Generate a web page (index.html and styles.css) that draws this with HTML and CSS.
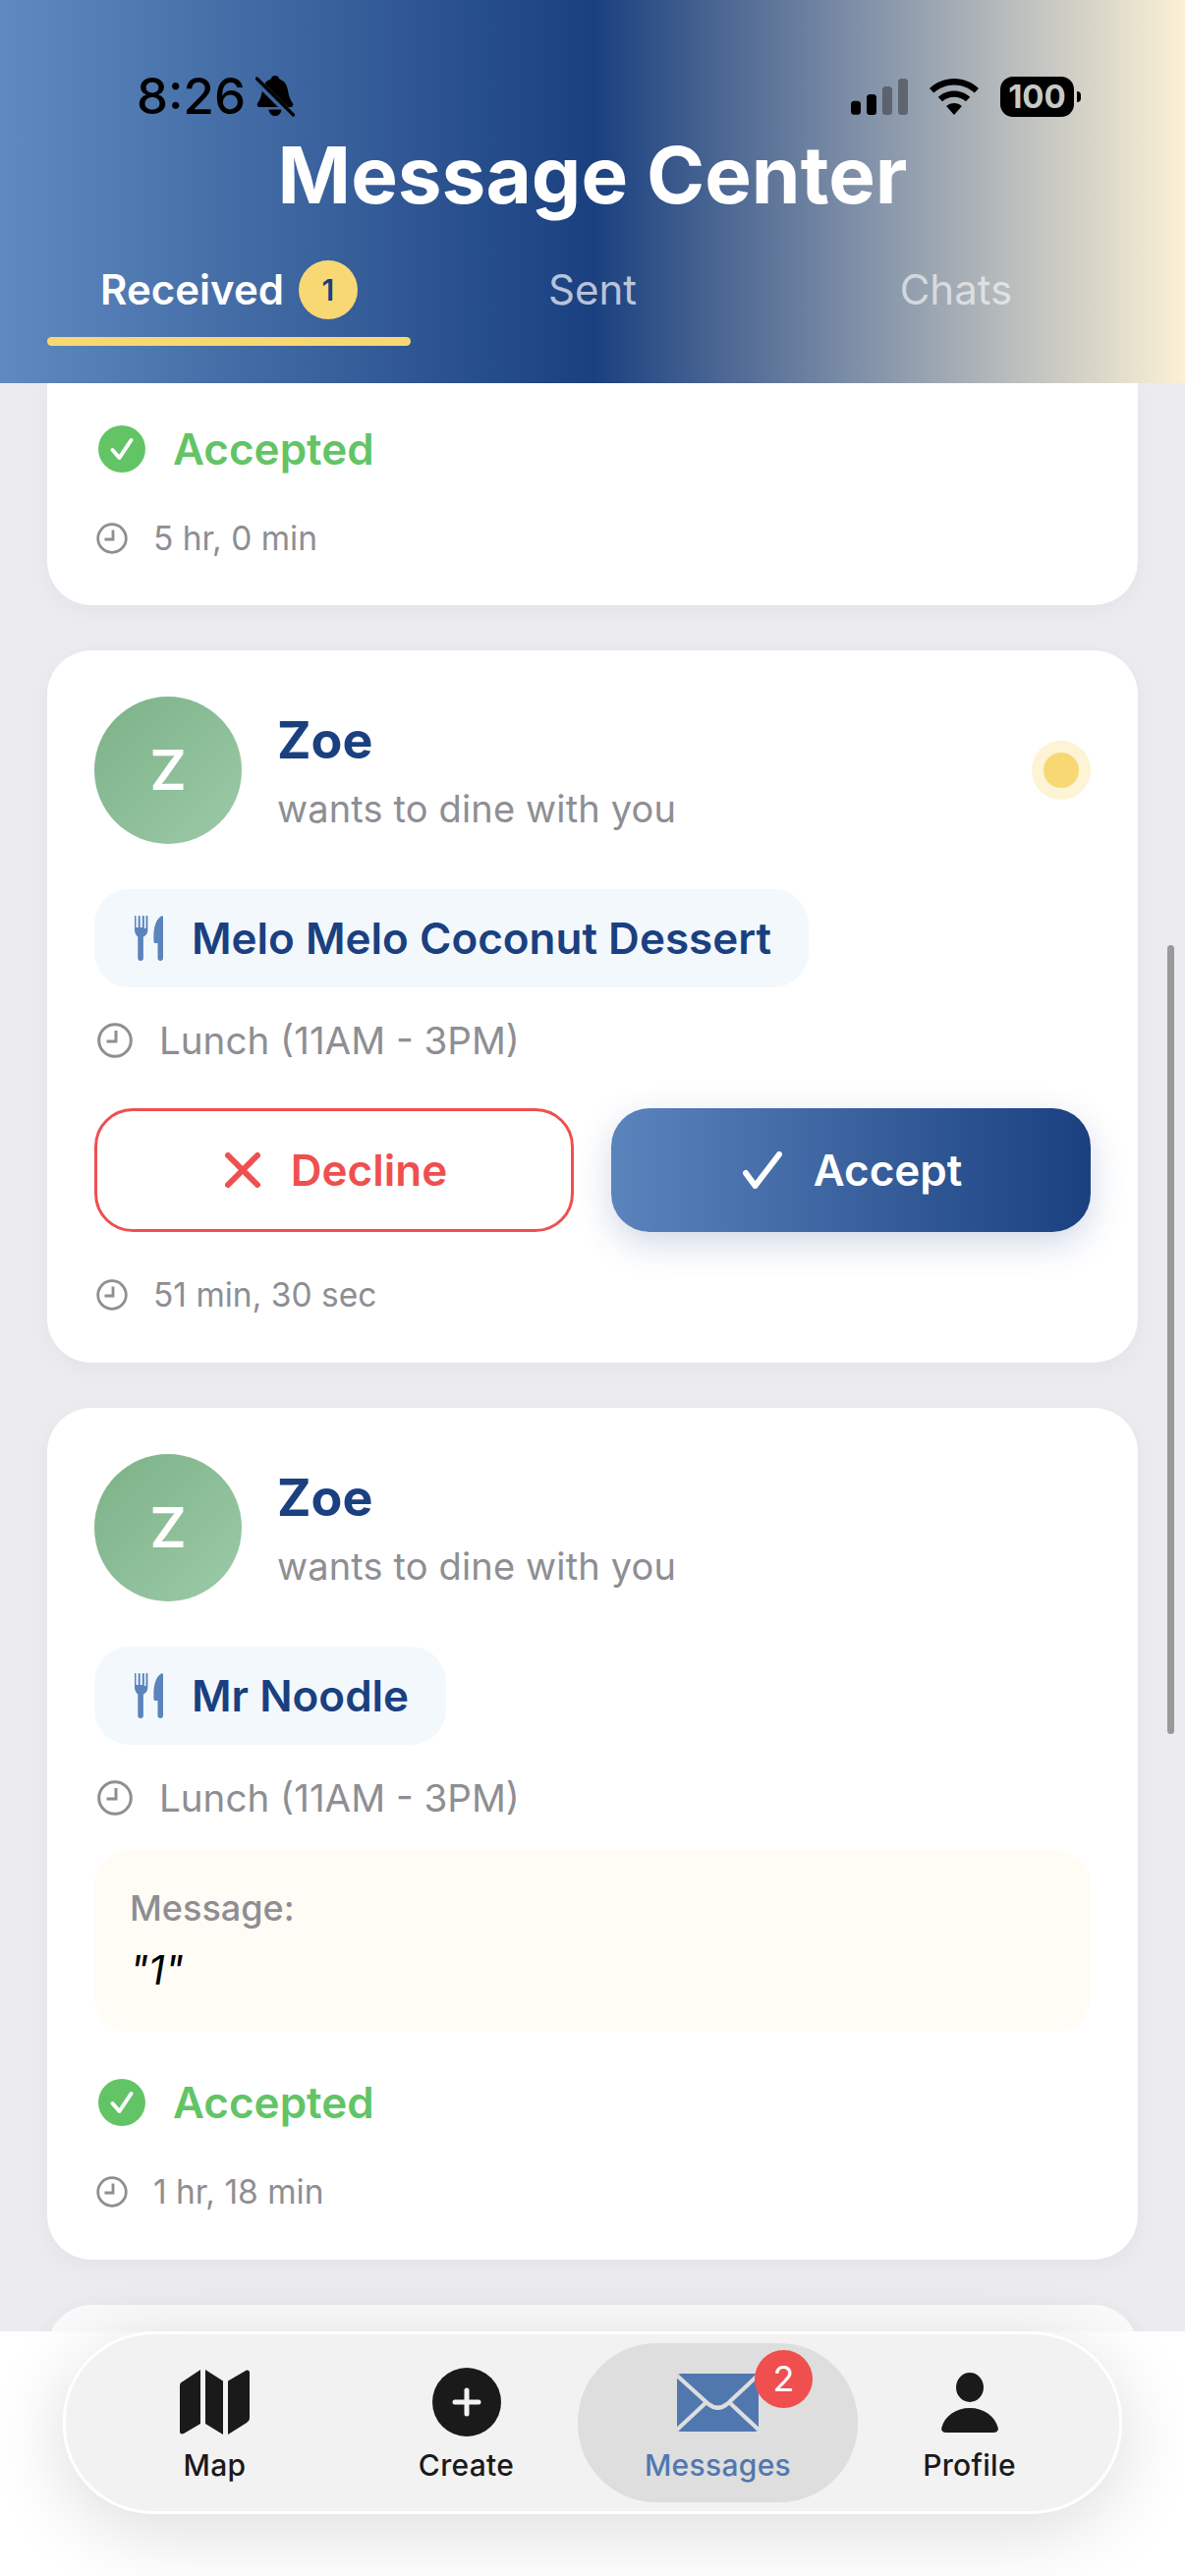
FILE: index.html
```html
<!DOCTYPE html>
<html lang="en">
<head>
<meta charset="utf-8">
<title>Message Center</title>
<link rel="stylesheet" href="styles.css">
</head>
<body>
<div class="app">
  <header class="header">
    <div class="status">
      <div class="status-left">
        <span class="clock-time">8:26</span>
        <svg class="bell" viewBox="0 0 40 42" aria-hidden="true">
          <path fill="#000" d="M20 0c2.400 0 4 1.600 4.300 3.500C29.600 5 32 9.400 33 15c.9 5.200 2 9.400 4.700 12.700 1.300 1.600.5 4.300-2 4.300H4.300c-2.500 0-3.300-2.700-2-4.300C5 24.400 6.100 20.200 7 15c1-5.600 3.400-10 8.700-11.500C16 1.600 17.600 0 20 0z"/>
          <path fill="#000" d="M13.500 34.500h13C26 38.500 23.500 41 20 41s-6-2.500-6.500-6.500z"/>
          <path stroke="#3d659f" stroke-width="7" d="M-1 3l40 40" fill="none"/>
          <path stroke="#000" stroke-width="3.200" stroke-linecap="round" d="M1.500 3l37 37" fill="none"/>
        </svg>
      </div>
      <div class="status-right">
        <svg class="signal" viewBox="0 0 58 37" aria-hidden="true">
          <rect x="0" y="22.700" width="10" height="14" rx="3.500" fill="#000"/>
          <rect x="16" y="16" width="10" height="21" rx="3.500" fill="#000"/>
          <rect x="32" y="8" width="10" height="29" rx="3.500" fill="#000" fill-opacity=".35"/>
          <rect x="48" y="0" width="10" height="37" rx="3.500" fill="#000" fill-opacity=".35"/>
        </svg>
        <svg class="wifi" viewBox="0 0 50 37" aria-hidden="true">
          <path fill="#000" d="M25 0c9.700 0 18.400 3.800 25 10l-4.300 4.500C40.300 9.500 33 6.400 25 6.400S9.700 9.500 4.300 14.500L0 10C6.600 3.800 15.300 0 25 0z"/>
          <path fill="#000" d="M25 12.500c6.300 0 12 2.400 16.300 6.300l-4.400 4.500c-3.100-2.800-7.300-4.500-11.900-4.500s-8.800 1.700-11.900 4.500l-4.400-4.500C13 14.900 18.700 12.500 25 12.500z"/>
          <path fill="#000" d="M25 25c3 0 5.800 1.100 7.900 3L25 37l-7.900-9c2.100-1.900 4.900-3 7.900-3z"/>
        </svg>
        <div class="battery">
          <span class="battery-body">100</span>
          <span class="battery-cap"></span>
        </div>
      </div>
    </div>
    <h1 class="title">Message Center</h1>
    <nav class="tabs">
      <div class="tab tab-active">
        <div class="tab-label"><span>Received</span><span class="tab-badge">1</span></div>
        <div class="tab-line"></div>
      </div>
      <div class="tab">
        <div class="tab-label"><span>Sent</span></div>
        <div class="tab-line"></div>
      </div>
      <div class="tab tab-faint">
        <div class="tab-label"><span>Chats</span></div>
        <div class="tab-line"></div>
      </div>
    </nav>
  </header>

  <main class="list">
    <section class="card card-clipped">
      <div class="state">
        <svg class="state-icon" viewBox="0 0 48 48" aria-hidden="true"><circle cx="24" cy="24" r="24" fill="#63c466"/><path d="M14.500 25l7 8L33.500 15" fill="none" stroke="#fff" stroke-width="4" stroke-linecap="round" stroke-linejoin="round"/></svg>
        <span>Accepted</span>
      </div>
      <div class="age">
        <svg class="age-icon" viewBox="0 0 32 32" aria-hidden="true"><circle cx="16" cy="16" r="14.300" fill="none" stroke="#8e8e93" stroke-width="2.800"/><path d="M17 7.500V17H8.500" fill="none" stroke="#8e8e93" stroke-width="2.800"/></svg>
        <span>5 hr, 0 min</span>
      </div>
    </section>

    <section class="card">
      <div class="person">
        <div class="avatar">Z</div>
        <div class="who">
          <div class="name">Zoe</div>
          <div class="sub">wants to dine with you</div>
        </div>
        <span class="dot"></span>
      </div>
      <div class="place">
        <svg class="place-icon" viewBox="0 0 29 46" aria-hidden="true"><path fill="#5b84bd" d="M.5 0c.6 0 1 .4 1 1v11h2.200V1c0-.6.500-1 1-1s1 .4 1 1v11h2.100V1c0-.6.500-1 1-1s1 .4 1 1v11.500c0 .8 1 0 1.200.5h.500V1c0-.6.500-1 1-1s.9.400.9 1v13.500c0 3.500-2 6-4.500 7V43.500c0 1.400-1.200 2.500-2.800 2.500s-2.800-1.100-2.800-2.500V21.500C2 20.500 0 18 0 14.500V1C0 .4 0 0 .5 0z"/><path fill="#5b84bd" d="M29 1.500V43.500c0 1.400-1.200 2.500-2.700 2.500s-2.800-1.100-2.800-2.500V28h-2.500c-.8 0-1.500-.7-1.500-1.500C19 18 19.500 5 27 .4c1-.6 2 0 2 1.100z"/></svg>
        <span>Melo Melo Coconut Dessert</span>
      </div>
      <div class="when">
        <svg class="when-icon" viewBox="0 0 36 36" aria-hidden="true"><circle cx="18" cy="18" r="16.300" fill="none" stroke="#8e8e93" stroke-width="3"/><path d="M19 8v11H9.500" fill="none" stroke="#8e8e93" stroke-width="3"/></svg>
        <span>Lunch (11AM - 3PM)</span>
      </div>
      <div class="actions">
        <div class="btn btn-decline">
          <svg class="btn-x" viewBox="0 0 36 36" aria-hidden="true"><path d="M3 3l30 30M33 3L3 33" fill="none" stroke="#ef4f4f" stroke-width="6" stroke-linecap="round"/></svg>
          <span>Decline</span>
        </div>
        <div class="btn btn-accept">
          <svg class="btn-check" viewBox="0 0 40 38" aria-hidden="true"><path d="M3 22l9.500 13L37 3" fill="none" stroke="#fff" stroke-width="6" stroke-linecap="round" stroke-linejoin="round"/></svg>
          <span>Accept</span>
        </div>
      </div>
      <div class="age">
        <svg class="age-icon" viewBox="0 0 32 32" aria-hidden="true"><circle cx="16" cy="16" r="14.300" fill="none" stroke="#8e8e93" stroke-width="2.800"/><path d="M17 7.500V17H8.500" fill="none" stroke="#8e8e93" stroke-width="2.800"/></svg>
        <span>51 min, 30 sec</span>
      </div>
    </section>

    <section class="card">
      <div class="person">
        <div class="avatar">Z</div>
        <div class="who">
          <div class="name">Zoe</div>
          <div class="sub">wants to dine with you</div>
        </div>
      </div>
      <div class="place">
        <svg class="place-icon" viewBox="0 0 29 46" aria-hidden="true"><path fill="#5b84bd" d="M.5 0c.6 0 1 .4 1 1v11h2.200V1c0-.6.500-1 1-1s1 .4 1 1v11h2.100V1c0-.6.500-1 1-1s1 .4 1 1v11.500c0 .8 1 0 1.200.5h.500V1c0-.6.500-1 1-1s.9.400.9 1v13.500c0 3.500-2 6-4.500 7V43.500c0 1.400-1.200 2.500-2.800 2.500s-2.800-1.100-2.800-2.500V21.500C2 20.500 0 18 0 14.500V1C0 .4 0 0 .5 0z"/><path fill="#5b84bd" d="M29 1.500V43.500c0 1.400-1.200 2.500-2.700 2.500s-2.800-1.100-2.800-2.500V28h-2.500c-.8 0-1.500-.7-1.500-1.500C19 18 19.500 5 27 .4c1-.6 2 0 2 1.100z"/></svg>
        <span>Mr Noodle</span>
      </div>
      <div class="when">
        <svg class="when-icon" viewBox="0 0 36 36" aria-hidden="true"><circle cx="18" cy="18" r="16.300" fill="none" stroke="#8e8e93" stroke-width="3"/><path d="M19 8v11H9.500" fill="none" stroke="#8e8e93" stroke-width="3"/></svg>
        <span>Lunch (11AM - 3PM)</span>
      </div>
      <div class="note">
        <div class="note-label">Message:</div>
        <div class="note-text">"1"</div>
      </div>
      <div class="state state-after-note">
        <svg class="state-icon" viewBox="0 0 48 48" aria-hidden="true"><circle cx="24" cy="24" r="24" fill="#63c466"/><path d="M14.500 25l7 8L33.500 15" fill="none" stroke="#fff" stroke-width="4" stroke-linecap="round" stroke-linejoin="round"/></svg>
        <span>Accepted</span>
      </div>
      <div class="age">
        <svg class="age-icon" viewBox="0 0 32 32" aria-hidden="true"><circle cx="16" cy="16" r="14.300" fill="none" stroke="#8e8e93" stroke-width="2.800"/><path d="M17 7.500V17H8.500" fill="none" stroke="#8e8e93" stroke-width="2.800"/></svg>
        <span>1 hr, 18 min</span>
      </div>
    </section>

    <section class="card card-stub"></section>
  </main>

  <div class="scrollbar"></div>

  <footer class="dock">
    <nav class="dock-bar">
      <div class="dock-item">
        <div class="dock-icon">
          <svg class="icon-map" viewBox="0 0 71 66" aria-hidden="true"><path fill="#1a1a1a" d="M21 0v55L4 65C1.500 66 0 65 0 63V16c0-2 1-3 3-4z"/><path fill="#1a1a1a" d="M26 0l18 11.500V66L26 55z"/><path fill="#1a1a1a" d="M49 66V11.500L67 1C69.500 0 71 1 71 3v46c0 2-1 3.500-3 5z"/></svg>
        </div>
        <span class="dock-label">Map</span>
      </div>
      <div class="dock-item">
        <div class="dock-icon">
          <svg class="icon-create" viewBox="0 0 70 70" aria-hidden="true"><circle cx="35" cy="35" r="35" fill="#1a1a1a"/><path d="M35 23v24M23 35h24" fill="none" stroke="#f2f2f2" stroke-width="5" stroke-linecap="round"/></svg>
        </div>
        <span class="dock-label">Create</span>
      </div>
      <div class="dock-item dock-item-active">
        <div class="dock-icon">
          <div class="mail-wrap">
            <svg class="icon-mail" viewBox="0 0 83 59" aria-hidden="true"><rect width="83" height="59" rx="4" fill="#5178ae"/><path d="M0 2l32 29q9.500 7.500 19 0L81 3M0 57l29-27M83 57L54 30" fill="none" stroke="#dedede" stroke-width="4.200"/></svg>
            <span class="mail-badge">2</span>
          </div>
        </div>
        <span class="dock-label">Messages</span>
      </div>
      <div class="dock-item">
        <div class="dock-icon">
          <svg class="icon-profile" viewBox="0 0 58 61" aria-hidden="true"><ellipse cx="29" cy="15" rx="14" ry="15" fill="#1a1a1a"/><path fill="#1a1a1a" d="M5 61c-3.500 0-5.500-2-4.700-5C3.500 44 15 36 29 36s25.500 8 28.700 20c.8 3-1.200 5-4.700 5z"/></svg>
        </div>
        <span class="dock-label">Profile</span>
      </div>
    </nav>
  </footer>
</div>
</body>
</html>
```

FILE: styles.css
```css
* { box-sizing: border-box; }

html, body {
  margin: 0;
  padding: 0;
}

body {
  font-family: "Inter", "Liberation Sans", sans-serif;
  background: #ebebf0;
}

.app {
  position: relative;
  width: 1206px;
  height: 2622px;
  overflow: hidden;
  background: #ebebf0;
}

/* Header */
.header {
  height: 390px;
  padding-top: 72px;
  background: linear-gradient(90deg, #5f8abf 0%, #1a4080 50%, #fbf1d6 100%);
}

.status {
  height: 52px;
  padding: 0 106px 0 139px;
  display: flex;
  align-items: center;
  justify-content: space-between;
}

.status-left {
  display: flex;
  align-items: center;
  gap: 10px;
}

.clock-time {
  font-size: 51px;
  line-height: 52px;
  font-weight: 500;
  color: #000;
}

.bell { width: 40px; height: 42px; overflow: hidden; }

.status-right {
  display: flex;
  align-items: center;
  gap: 22px;
}

.signal { width: 58px; height: 37px; }
.wifi { width: 50px; height: 37px; }

.battery {
  display: flex;
  align-items: center;
  gap: 3px;
}

.battery-body {
  width: 75px;
  height: 41px;
  border-radius: 13px;
  background: #000;
  color: #c6cac9;
  font-size: 33px;
  line-height: 41px;
  font-weight: 700;
  text-align: center;
}

.battery-cap {
  width: 4px;
  height: 11px;
  border-radius: 0 6px 6px 0;
  background: #000;
}

.title {
  margin: 6px 0 0;
  height: 100px;
  font-size: 80px;
  line-height: 96px;
  font-weight: 700;
  color: #fff;
  text-align: center;
}

.tabs {
  margin-top: 35px;
  padding: 0 48px;
  display: grid;
  grid-template-columns: repeat(3, 370px);
}

.tab {
  display: flex;
  flex-direction: column;
  color: rgba(255, 255, 255, .7);
}

.tab-faint { color: rgba(255, 255, 255, .6); }

.tab-label {
  height: 60px;
  display: flex;
  align-items: center;
  justify-content: center;
  gap: 15px;
  font-size: 42px;
  line-height: 60px;
  font-weight: 400;
}

.tab-active { color: #fff; }
.tab-active .tab-label { font-weight: 600; }

.tab-badge {
  width: 60px;
  height: 60px;
  border-radius: 50%;
  background: #f8d873;
  color: #1a4080;
  font-size: 30px;
  font-weight: 600;
  text-align: center;
}

.tab-line {
  margin-top: 18px;
  height: 9px;
  border-radius: 5px;
}

.tab-active .tab-line { background: #f8d873; }

/* List */
.list {
  height: 2232px;
  padding: 0 48px;
  display: flex;
  flex-direction: column;
  gap: 46px;
  overflow: hidden;
}

.card {
  flex: none;
  padding: 47px 48px 48px;
  background: #fff;
  border-radius: 45px;
  box-shadow: 0 6px 24px rgba(0, 0, 0, .04);
  display: flex;
  flex-direction: column;
}

.card-clipped {
  padding-top: 37px;
  padding-bottom: 47px;
  border-radius: 0 0 45px 45px;
}

.card-stub {
  height: 90px;
  background: #fafafa;
}

.person {
  height: 150px;
  display: flex;
  align-items: center;
  gap: 36px;
}

.avatar {
  flex: none;
  width: 150px;
  height: 150px;
  border-radius: 50%;
  background: linear-gradient(135deg, #7cb288, #9ccaa8);
  color: #fff;
  font-size: 57px;
  line-height: 150px;
  font-weight: 600;
  text-align: center;
}

.who {
  flex: 1;
  padding-top: 3px;
}

.name {
  font-size: 52px;
  line-height: 62px;
  font-weight: 700;
  color: #1a4080;
}

.sub {
  margin-top: 13px;
  font-size: 38px;
  line-height: 50px;
  font-weight: 400;
  color: #8e8e93;
  letter-spacing: .15px;
}

.dot {
  flex: none;
  width: 36px;
  height: 36px;
  margin-right: 12px;
  border-radius: 50%;
  background: #f8d873;
  box-shadow: 0 0 0 12px rgba(248, 216, 115, .3);
}

.place {
  margin-top: 46px;
  height: 100px;
  align-self: flex-start;
  padding: 0 38px 0 41px;
  display: flex;
  align-items: center;
  gap: 29px;
  background: #f3f8fd;
  border-radius: 36px;
  color: #1a4080;
  font-size: 44px;
  font-weight: 600;
}

.place-icon { width: 29px; height: 46px; flex: none; }

.when {
  margin-top: 30px;
  height: 48px;
  padding-left: 3px;
  display: flex;
  align-items: center;
  gap: 27px;
  font-size: 38.600px;
  line-height: 48px;
  color: #8e8e93;
}

.when-icon { width: 36px; height: 36px; flex: none; }

.actions {
  margin-top: 45px;
  display: grid;
  grid-template-columns: 488px 488px;
  gap: 38px;
}

.btn {
  height: 126px;
  border-radius: 39px;
  display: flex;
  align-items: center;
  justify-content: center;
  font-size: 44px;
  font-weight: 600;
}

.btn-decline {
  padding-left: 4px;
  gap: 31px;
  border: 3px solid #ef4f4f;
  background: #fff;
  color: #ef4f4f;
}

.btn-accept {
  padding-left: 3px;
  gap: 32px;
  background: linear-gradient(90deg, #5b84bd, #1a4080);
  color: #fff;
  box-shadow: 0 12px 36px rgba(26, 64, 128, .2);
}

.btn-x { width: 36px; height: 36px; }
.btn-check { width: 40px; height: 38px; }

.age {
  margin-top: 43px;
  height: 42px;
  padding-left: 2px;
  display: flex;
  align-items: center;
  gap: 26px;
  font-size: 33.500px;
  line-height: 42px;
  color: #8e8e93;
}

.state + .age { margin-top: 40px; }

.age-icon { width: 32px; height: 32px; flex: none; }

.state {
  height: 60px;
  padding-left: 4px;
  display: flex;
  align-items: center;
  gap: 28px;
  font-size: 44px;
  line-height: 60px;
  font-weight: 600;
  color: #63c466;
}

.state-after-note { margin-top: 42px; }

.state-icon { width: 48px; height: 48px; flex: none; }

.note {
  margin-top: 29px;
  height: 185px;
  padding: 36px 36px 0;
  background: #fffcf5;
  border-radius: 36px;
}

.note-label {
  font-size: 36px;
  line-height: 46px;
  font-weight: 500;
  color: #8e8e93;
}

.note-text {
  margin-top: 15px;
  font-size: 41px;
  line-height: 50px;
  font-style: italic;
  color: #000;
}

/* Scrollbar */
.scrollbar {
  position: absolute;
  top: 962px;
  left: 1188px;
  width: 7px;
  height: 803px;
  border-radius: 4px;
  background: #999;
}

/* Dock */
.dock {
  position: absolute;
  left: 0;
  right: 0;
  bottom: 0;
  height: 249px;
  padding: 0 64px;
  background: #fff;
}

.dock-bar {
  height: 186px;
  padding: 9px 23.500px;
  display: flex;
  background: #f2f2f2;
  border: 3px solid #fff;
  border-radius: 93px / 90px;
  box-shadow: 0 16px 80px rgba(0, 0, 0, .14);
}

.dock-item {
  flex: none;
  width: 256px;
  height: 162px;
  padding-top: 25px;
  display: flex;
  flex-direction: column;
  align-items: center;
  border-radius: 80px;
  color: #1a1a1a;
}

.dock-item-active {
  width: 285px;
  margin: 0 -14.500px;
  background: #dedede;
  color: #5178ae;
}

.dock-icon {
  height: 70px;
  display: flex;
  align-items: center;
  justify-content: center;
}

.icon-map { width: 71px; height: 66px; }
.icon-create { width: 70px; height: 70px; }
.icon-mail { display: block; width: 83px; height: 59px; }
.icon-profile { width: 58px; height: 61px; }

.mail-wrap { position: relative; }

.mail-badge {
  position: absolute;
  left: 79px;
  top: -24px;
  width: 59px;
  height: 59px;
  border-radius: 50%;
  background: #ef4f4f;
  color: #fff;
  font-size: 36px;
  line-height: 59px;
  font-weight: 400;
  text-align: center;
}

.dock-label {
  margin-top: 11px;
  font-size: 30px;
  line-height: 36px;
  font-weight: 500;
  letter-spacing: .3px;
}
```
